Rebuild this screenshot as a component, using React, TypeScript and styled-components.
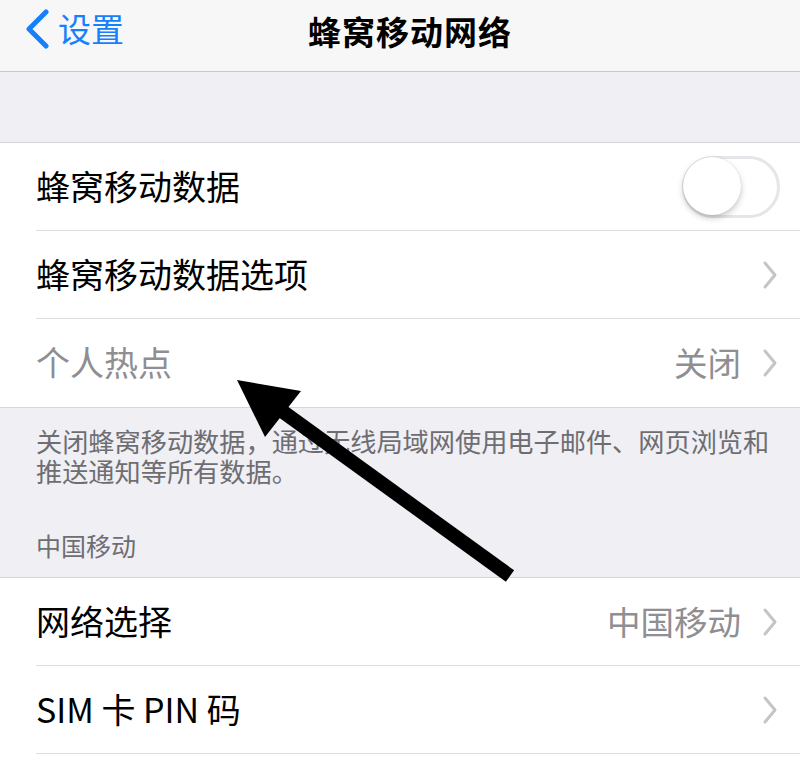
import styled, { createGlobalStyle } from "styled-components";

const GlobalStyle = createGlobalStyle`
  html, body {
    margin: 0;
    padding: 0;
    background: #efeff4;
  }
  body {
    font-family: "Noto Sans CJK SC", "Noto Sans", "Liberation Sans", sans-serif;
    -webkit-font-smoothing: antialiased;
  }
`;

const Screen = styled.div`
  position: relative;
  width: 800px;
  height: 777px;
  overflow: hidden;
  background: #efeff4;
`;

const NavBar = styled.header`
  height: 72px;
  box-sizing: border-box;
  background: #f7f7f7;
  border-bottom: 1px solid #c8c7cc;
  display: grid;
  grid-template-columns: 1fr auto 1fr;
  align-items: center;
`;

const BackButton = styled.div`
  display: flex;
  align-items: center;
  gap: 8px;
  padding-left: 24px;
  margin-top: -14px;
  color: #167ffb;
  font-size: 33px;
  line-height: 1;
`;

const Title = styled.h1`
  margin: -10px 0 0 20px;
  font-size: 33px;
  font-weight: 700;
  color: #000;
  letter-spacing: 1px;
`;

const Gap = styled.div`
  height: 70px;
`;

const Group = styled.section`
  background: #fff;
  border-top: 1px solid #d6d6da;
  border-bottom: 1px solid #d6d6da;
`;

const Row = styled.div<{ $last?: boolean }>`
  position: relative;
  height: 88px;
  display: flex;
  align-items: center;
  padding: 0 22px 0 36px;
  &::after {
    content: "";
    display: ${(p) => (p.$last ? "none" : "block")};
    position: absolute;
    left: 36px;
    right: 0;
    bottom: 0;
    height: 1px;
    background: #dcdce0;
  }
`;

const Label = styled.span<{ $muted?: boolean }>`
  flex: 1;
  font-size: 34px;
  color: ${(p) => (p.$muted ? "#8e8e93" : "#000")};
  margin-top: -4px;
`;

const Value = styled.span`
  font-size: 33.5px;
  color: #8e8e93;
  margin-right: 21px;
  margin-top: -4px;
`;

const Switch = styled.div`
  position: relative;
  width: 98px;
  height: 62px;
  box-sizing: border-box;
  border-radius: 31px;
  border: 3px solid #e5e5ea;
  background: #fff;
  margin-right: -2px;
`;

const Knob = styled.div`
  position: absolute;
  left: -2px;
  top: -2px;
  width: 58px;
  height: 58px;
  border-radius: 50%;
  background: #fff;
  box-shadow: 0 3px 6px rgba(0, 0, 0, 0.22), 0 0 1px rgba(0, 0, 0, 0.15);
`;

const Footer = styled.p`
  margin: 0;
  padding: 18px 20px 0 36px;
  font-size: 26.2px;
  line-height: 30px;
  color: #6d6d72;
`;

const SectionHeader = styled.div`
  padding: 44px 36px 17px;
  font-size: 25px;
  line-height: 30px;
  color: #6d6d72;
`;

const Filler = styled.div`
  height: 40px;
  background: #fff;
`;

const Overlay = styled.svg`
  position: absolute;
  left: 0;
  top: 0;
  pointer-events: none;
`;

function Chevron() {
  return (
    <svg width="16" height="30" viewBox="0 0 16 30">
      <path
        d="M3 3 L13 15 L3 27"
        fill="none"
        stroke="#c4c4c9"
        strokeWidth="3"
        strokeLinecap="round"
        strokeLinejoin="round"
      />
    </svg>
  );
}

function BackChevron() {
  return (
    <svg width="26" height="40" viewBox="0 0 26 40">
      <path
        d="M22 3 L5 20 L22 37"
        fill="none"
        stroke="#167ffb"
        strokeWidth="5"
        strokeLinecap="round"
        strokeLinejoin="round"
      />
    </svg>
  );
}

export default function App() {
  return (
    <>
      <GlobalStyle />
      <Screen>
        <NavBar>
          <BackButton>
            <BackChevron />
            设置
          </BackButton>
          <Title>蜂窝移动网络</Title>
          <div />
        </NavBar>

        <Gap />

        <Group>
          <Row>
            <Label>蜂窝移动数据</Label>
            <Switch>
              <Knob />
            </Switch>
          </Row>
          <Row>
            <Label>蜂窝移动数据选项</Label>
            <Chevron />
          </Row>
          <Row $last>
            <Label $muted>个人热点</Label>
            <Value>关闭</Value>
            <Chevron />
          </Row>
        </Group>

        <Footer>
          关闭蜂窝移动数据，通过无线局域网使用电子邮件、网页浏览和推送通知等所有数据。
        </Footer>

        <SectionHeader>中国移动</SectionHeader>

        <Group>
          <Row>
            <Label>网络选择</Label>
            <Value>中国移动</Value>
            <Chevron />
          </Row>
          <Row>
            <Label>SIM 卡 PIN 码</Label>
            <Chevron />
          </Row>
          <Filler />
        </Group>

        {/* annotation arrow drawn over the list */}
        <Overlay width="800" height="777" viewBox="0 0 800 777">
          <line
            x1="510"
            y1="576"
            x2="275"
            y2="406"
            stroke="#000"
            strokeWidth="14"
          />
          <polygon points="237,380 301,391 265,437" fill="#000" />
        </Overlay>
      </Screen>
    </>
  );
}
